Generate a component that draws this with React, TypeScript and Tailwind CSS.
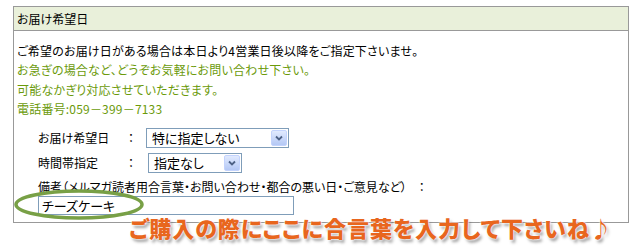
const jp = "font-['Noto_Sans_CJK_JP','Noto_Sans',sans-serif] [font-feature-settings:'palt']";

function SelectBox({ value, width }: { value: string; width: string }) {
  return (
    <div className={`${width} h-[20px] border border-[#7f9db9] bg-white flex items-center justify-between pl-[5px] pr-[1px]`}>
      <span className="text-[13px] leading-none text-black">{value}</span>
      <div className="w-[16px] h-[16px] rounded-[2px] border border-[#c3d3fd] bg-gradient-to-b from-[#e1eafe] to-[#b4c8f5] flex items-center justify-center">
        <svg width="8" height="6" viewBox="0 0 8 6">
          <path d="M1 1.5 L4 4.5 L7 1.5" fill="none" stroke="#4d6185" strokeWidth="1.8" />
        </svg>
      </div>
    </div>
  );
}

export default function App() {
  return (
    <div className={`relative w-[640px] h-[252px] bg-white pt-[6px] pl-[13px] ${jp}`}>
      <div className="w-[616px] h-[217px] border border-[#999]">
        <div className="h-[24px] bg-[#e9f0da] border-b border-[#999] pl-[3px] flex items-center text-[12px] text-black">
          お届け希望日
        </div>
        <div className="pl-[3px] pt-[10px] text-[12px] leading-[19.3px] tracking-[0.2px]">
          <p className="text-black">ご希望のお届け日がある場合は本日より4営業日後以降をご指定下さいませ。</p>
          <p className="text-[#6b9a0a]">お急ぎの場合など、どうぞお気軽にお問い合わせ下さい。</p>
          <p className="text-[#6b9a0a]">可能なかぎり対応させていただきます。</p>
          <p className="text-[#6b9a0a]">電話番号:059－399－7133</p>

          <div className="pl-[21px] mt-[9px] text-black tracking-normal">
            <div className="flex items-center h-[21px]">
              <span className="w-[90px]">お届け希望日</span>
              <span className="w-[18px]">：</span>
              <SelectBox value="特に指定しない" width="w-[143px]" />
            </div>
            <div className="flex items-center h-[21px] mt-[4px]">
              <span className="w-[90px]">時間帯指定</span>
              <span className="w-[20px]">：</span>
              <SelectBox value="指定なし" width="w-[94px]" />
            </div>
            <div className="mt-[4px] h-[19px] flex items-center">
              備考（メルマガ読者用合言葉・お問い合わせ・都合の悪い日・ご意見など）　：
            </div>
            <div className="w-[256px] h-[19px] border border-[#7f9db9] flex items-center pl-[3px] text-[13px]">
              チーズケーキ
            </div>
          </div>
        </div>
      </div>

      <svg className="absolute left-[12px] top-[188px]" width="134" height="33" viewBox="0 0 134 33">
        <ellipse cx="67" cy="16.5" rx="63" ry="13.5" fill="none" stroke="#78a046" strokeWidth="3.5" />
      </svg>

      <div className="absolute left-[129px] top-[212px] text-[22px] font-black leading-[30px] text-[#e8661e] [text-shadow:0_0_2px_#fff,0_0_2px_#fff,2px_3px_3px_rgba(0,0,0,0.35)] tracking-[1px] whitespace-nowrap">
        ご購入の際にここに合言葉を入力して下さいね♪
      </div>
    </div>
  );
}
